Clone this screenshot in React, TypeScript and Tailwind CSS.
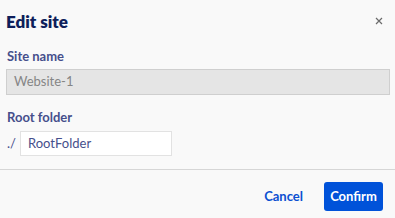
export default function App() {
  return (
    <div className="w-[395px] h-[218px] bg-[#f9f9f9] flex flex-col font-['Lato',sans-serif] overflow-hidden">
      <div className="flex items-start justify-between pl-[6px] pr-[12px] pt-[10px]">
        <h1 className="text-[17px] leading-[24px] font-extrabold text-[#0e1f5b]">Edit site</h1>
        <button className="mt-[7px]" aria-label="Close">
          <svg width="8" height="8" viewBox="0 0 8 8">
            <path d="M1 1L7 7M7 1L1 7" stroke="#6b6b6b" strokeWidth="1.2" />
          </svg>
        </button>
      </div>

      <div className="flex flex-col px-[6px] pt-[13px]">
        <label className="text-[13px] leading-[18px] font-bold text-[#464f8c] pl-[1px]">Site name</label>
        <div className="mt-[4px] h-[26px] w-[384px] border border-[#cfcfcf] bg-[#e5e5e5] flex items-center px-[7px] text-[13px] text-[#858585]">
          Website-1
        </div>

        <label className="mt-[13px] text-[13px] leading-[18px] font-bold text-[#464f8c] pl-[1px]">Root folder</label>
        <div className="mt-[5px] flex items-center">
          <span className="w-[14px] pl-[1px] text-[13px] text-[#464f8c]">./</span>
          <div className="h-[25px] w-[152px] border border-[#e2e2e2] bg-white flex items-center px-[7px] text-[13px] text-[#464f8c]">
            RootFolder
          </div>
        </div>
      </div>

      <div className="mt-[13px] border-t border-[#d6d6d6]" />

      <div className="flex items-center justify-end gap-[21px] pr-[12px] pt-[12px]">
        <button className="text-[13px] font-bold text-[#0b4fd1]">Cancel</button>
        <button className="h-[29px] w-[59px] rounded-[3px] bg-[#0052d9] text-[13px] font-bold text-white">
          Confirm
        </button>
      </div>
    </div>
  );
}
